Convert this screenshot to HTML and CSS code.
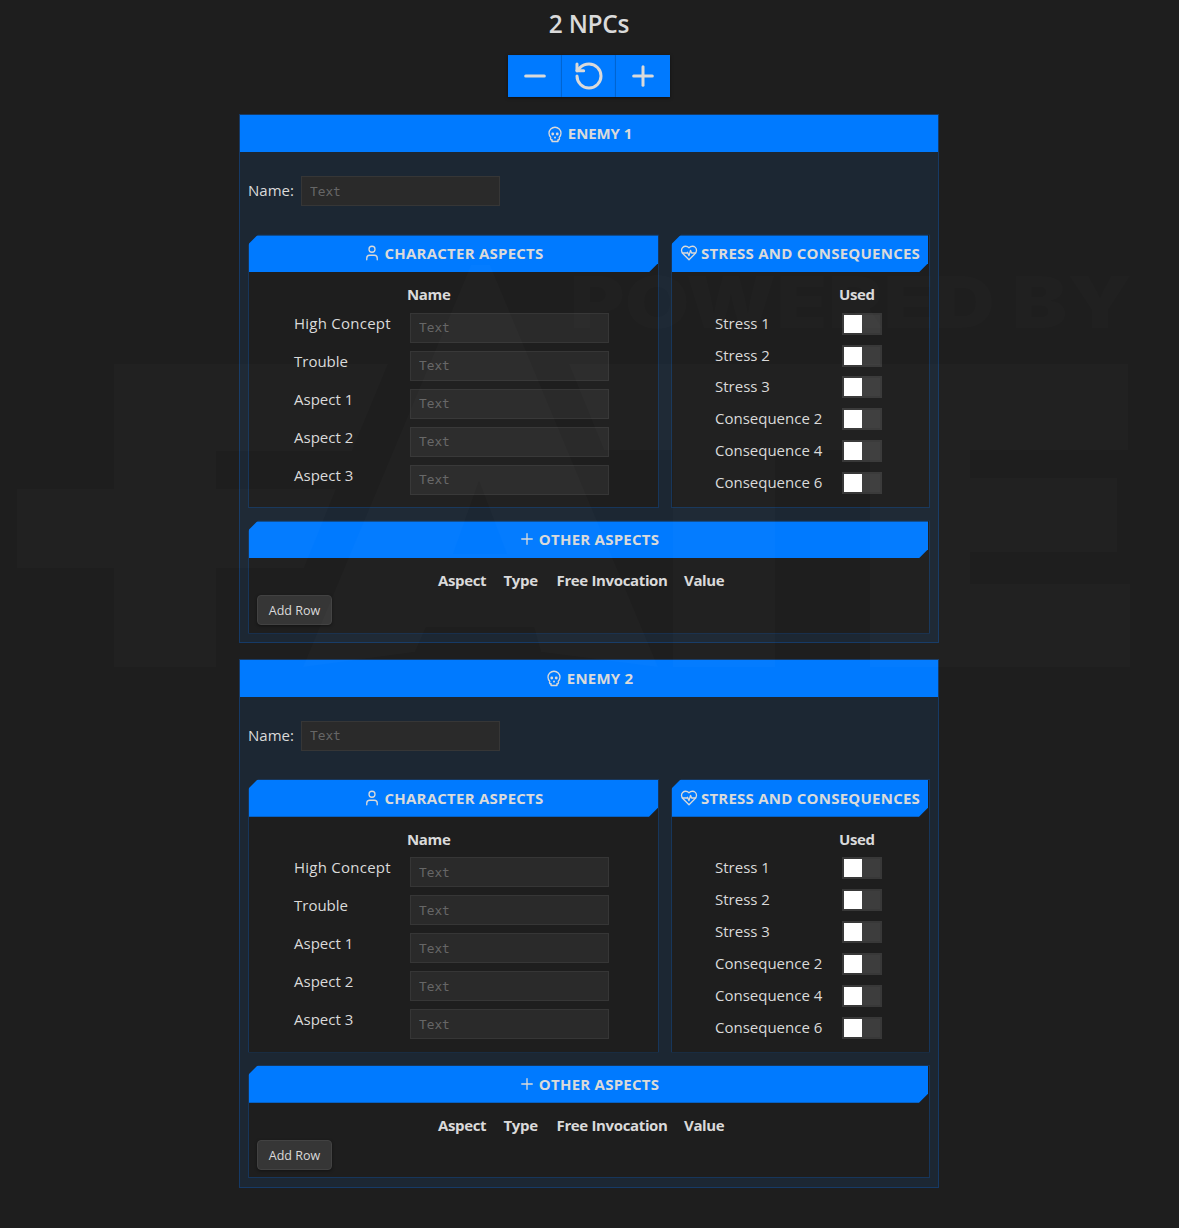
FILE: index.html
```html
<!DOCTYPE html>
<html lang="en">
<head>
<meta charset="utf-8">
<title>2 NPCs</title>
<link rel="stylesheet" href="styles.css">
</head>
<body>
<svg class="symbols" aria-hidden="true">
  <symbol id="skull" viewBox="0 0 24 24"><circle cx="9" cy="12" r="1"/><circle cx="15" cy="12" r="1"/><path d="M8 20v2h8v-2"/><path d="m12.5 17-.5-1-.5 1h1z"/><path d="M16 20a2 2 0 0 0 1.56-3.25 8 8 0 1 0-11.12 0A2 2 0 0 0 8 20"/></symbol>
  <symbol id="user" viewBox="0 0 24 24"><path d="M19 21v-2a4 4 0 0 0-4-4H9a4 4 0 0 0-4 4v2"/><circle cx="12" cy="7" r="4"/></symbol>
  <symbol id="heart" viewBox="0 0 24 24"><path d="M19 14c1.49-1.46 3-3.21 3-5.5A5.5 5.5 0 0 0 16.5 3c-1.76 0-3 .5-4.5 2-1.5-1.5-2.74-2-4.5-2A5.5 5.5 0 0 0 2 8.5c0 2.3 1.5 4.05 3 5.5l7 7Z"/><path d="M3.22 12H9.5l.5-1 2 4.5 2-7 1.5 3.5h5.27"/></symbol>
  <symbol id="plus" viewBox="0 0 24 24"><path d="M5 12h14"/><path d="M12 5v14"/></symbol>
</svg>
<main class="page">
  <h1 class="title">2 NPCs</h1>
  <div class="toolbar">
    <button class="tool"><svg viewBox="0 0 24 24"><path d="M5 12h14"/></svg></button>
    <button class="tool"><svg viewBox="0 0 24 24"><path d="M3 12a9 9 0 1 0 9-9 9.75 9.75 0 0 0-6.74 2.74L3 8"/><path d="M3 3v5h5"/></svg></button>
    <button class="tool"><svg viewBox="0 0 24 24"><use href="#plus"/></svg></button>
  </div>

  <section class="card">
    <h2 class="card-head"><svg><use href="#skull"/></svg><span class="enemy">ENEMY 1</span></h2>
    <div class="name-row"><label>Name:</label><input class="field" placeholder="Text"></div>
    <div class="columns">
      <div class="panel">
        <h3 class="panel-head"><svg><use href="#user"/></svg><span>CHARACTER ASPECTS</span></h3>
        <div class="aspects">
          <b class="col-name">Name</b>
          <label class="hc">High Concept</label><input class="field" placeholder="Text">
          <label>Trouble</label><input class="field" placeholder="Text">
          <label>Aspect 1</label><input class="field" placeholder="Text">
          <label>Aspect 2</label><input class="field" placeholder="Text">
          <label>Aspect 3</label><input class="field" placeholder="Text">
        </div>
      </div>
      <div class="panel">
        <h3 class="panel-head inset"><svg><use href="#heart"/></svg><span>STRESS AND CONSEQUENCES</span></h3>
        <div class="stress">
          <b class="col-used">Used</b>
          <label>Stress 1</label><i class="toggle"></i>
          <label>Stress 2</label><i class="toggle"></i>
          <label>Stress 3</label><i class="toggle"></i>
          <label>Consequence 2</label><i class="toggle"></i>
          <label>Consequence 4</label><i class="toggle"></i>
          <label>Consequence 6</label><i class="toggle"></i>
        </div>
      </div>
    </div>
    <div class="panel other">
      <h3 class="panel-head inset"><svg><use href="#plus"/></svg><span>OTHER ASPECTS</span></h3>
      <div class="other-cols"><b>Aspect</b><b>Type</b><b>Free Invocation</b><b>Value</b></div>
      <button class="add">Add Row</button>
    </div>
  </section>

  <section class="card">
    <h2 class="card-head"><svg><use href="#skull"/></svg><span class="enemy wide">ENEMY 2</span></h2>
    <div class="name-row"><label>Name:</label><input class="field" placeholder="Text"></div>
    <div class="columns">
      <div class="panel">
        <h3 class="panel-head"><svg><use href="#user"/></svg><span>CHARACTER ASPECTS</span></h3>
        <div class="aspects">
          <b class="col-name">Name</b>
          <label class="hc">High Concept</label><input class="field" placeholder="Text">
          <label>Trouble</label><input class="field" placeholder="Text">
          <label>Aspect 1</label><input class="field" placeholder="Text">
          <label>Aspect 2</label><input class="field" placeholder="Text">
          <label>Aspect 3</label><input class="field" placeholder="Text">
        </div>
      </div>
      <div class="panel">
        <h3 class="panel-head inset"><svg><use href="#heart"/></svg><span>STRESS AND CONSEQUENCES</span></h3>
        <div class="stress">
          <b class="col-used">Used</b>
          <label>Stress 1</label><i class="toggle"></i>
          <label>Stress 2</label><i class="toggle"></i>
          <label>Stress 3</label><i class="toggle"></i>
          <label>Consequence 2</label><i class="toggle"></i>
          <label>Consequence 4</label><i class="toggle"></i>
          <label>Consequence 6</label><i class="toggle"></i>
        </div>
      </div>
    </div>
    <div class="panel other">
      <h3 class="panel-head inset"><svg><use href="#plus"/></svg><span>OTHER ASPECTS</span></h3>
      <div class="other-cols"><b>Aspect</b><b>Type</b><b>Free Invocation</b><b>Value</b></div>
      <button class="add">Add Row</button>
    </div>
  </section>
</main>
<svg class="watermark" viewBox="0 0 1179 1228" aria-hidden="true">
  <path fill-rule="evenodd" d="M114 364H388L352 451H216V489H336L304 568H216V667H114V568H17V489H114Z
    M471 265H490L658 667L541 652L534 627H426L415 652L303 667Z M479 481L453 554H507Z
    M569 364H1128V450H970V478H1117V552H970V584H1130V667H870V450H775V667H673V450H604Z"/>
  <text class="wm-powered" x="570" y="328" textLength="562" lengthAdjust="spacingAndGlyphs">POWERED BY</text>
  <text class="wm-tm" x="1146" y="381" textLength="34">TM</text>
</svg>
</body>
</html>
```
FILE: styles.css
```css
* { box-sizing: border-box; }
body {
  margin: 0;
  background: #1e1e1e;
  color: #dadada;
  font: 15px/24px "Open Sans", "Noto Sans", sans-serif;
  overflow: hidden;
}
.symbols { display: none; }
svg { fill: none; stroke: currentColor; stroke-width: 2; stroke-linecap: round; stroke-linejoin: round; }
b, h1, h2, h3 { font-weight: 700; margin: 0; }
b { letter-spacing: -0.35px; }
.page { width: 700px; height: 1228px; margin-left: 239px; display: flex; flex-direction: column; }
.title { font-size: 24.5px; font-weight: 650; line-height: 32px; padding-top: 8px; text-align: center; letter-spacing: -0.3px; }
.toolbar { display: flex; width: 162px; margin: 15px 0 17.4px 269px; box-shadow: 0 1px 3px rgba(0,0,0,.5); }
.tool {
  width: 54px; height: 42px; padding: 0; border: 0; color: #dadada; background: #007aff;
  display: flex; align-items: center; justify-content: center;
}
.tool:not(:last-child) { box-shadow: inset -1px 0 1px rgba(0,0,0,.2); }
.tool svg { width: 32px; height: 32px; stroke-width: 2.25; }
.card {
  height: 528.6px; margin-bottom: 16px; padding: 0 8px;
  border: 1px solid #163a66; background: #1c2733;
}
.card-head {
  height: 37px; margin: 0 -8px; background: #007aff; font-size: 15px; line-height: 36px;
  display: flex; justify-content: center; align-items: center; gap: 4px;
}
.card-head svg, .panel-head svg { width: 18px; height: 18px; stroke-width: 1.75; flex: none; }
.card-head span, .panel-head span { height: 37px; }
.enemy { letter-spacing: -0.1px; }
.wide { letter-spacing: 0.2px; }
.name-row { display: flex; align-items: center; height: 30px; margin-top: 24px; }
.name-row label { width: 53px; height: 26px; }
.field {
  width: 199px; height: 30px; padding: 0 8px; border: 1px solid #363636; border-radius: 0;
  background: #2a2a2a; color: #dadada; font: 12.8px "DejaVu Sans Mono", monospace;
}
.field::placeholder { color: #666; opacity: 1; }
.columns { display: grid; grid-template-columns: 411px 259px; gap: 12px; margin-top: 28px; height: 273.6px; }
.panel {
  border: 1px solid #17365b; background: #1e1e1e;
  clip-path: polygon(10px 0, 100% 0, 100% 100%, 0 100%, 0 10px);
}
.panel-head {
  height: 36.8px; background: #007aff; font-size: 15px; line-height: 36px; letter-spacing: 0.24px;
  display: flex; justify-content: center; align-items: center; gap: 3px; white-space: nowrap;
  clip-path: polygon(0 0, 100% 0, 100% calc(100% - 9px), calc(100% - 9px) 100%, 0 100%);
}
.panel-head.inset { margin-right: 1px; }
.panel-head svg { margin-bottom: 1px; }
.aspects { display: grid; grid-template-columns: 116px 199px; grid-template-rows: 30.5px; grid-auto-rows: 38px; padding: 10px 0 0 45px; }
.col-name, .col-used { grid-column: 1 / -1; }
.col-name { padding-left: 113px; }
.aspects label { line-height: 20px; }
.hc { letter-spacing: 0.25px; }
.stress { display: grid; grid-template-columns: 127px 40px; grid-template-rows: 30.5px; grid-auto-rows: 31.85px; padding: 10px 0 0 43px; }
.col-used { padding-left: 124px; }
.stress label { line-height: 20px; }
.toggle { width: 40px; height: 22px; background: #3d3d3d; border: 2px solid #383838; }
.toggle::before { content: ""; display: block; width: 18px; height: 18px; background: #fff; }
.other { height: 113.4px; margin-top: 12.4px; }
.other-cols { display: grid; grid-template-columns: 65.5px 53px 127.5px auto; padding: 10px 0 0 189px; white-space: nowrap; }
.add {
  display: block; width: 75px; height: 30px; margin: 3.1px 0 0 8px; padding: 1px 0 0;
  border: 1px solid #424242; border-radius: 4px; background: #363636; color: #dadada;
  font: 12.5px "Open Sans", sans-serif; box-shadow: 0 1px 3px rgba(0,0,0,.4);
}
.watermark { position: absolute; left: 0; top: 0; width: 1179px; height: 1228px; fill: #fff; fill-opacity: .014; stroke: none; pointer-events: none; }
.wm-powered { font: 900 71px Inter, sans-serif; fill-opacity: .01; }
.wm-tm { font: 400 23px Inter, sans-serif; fill-opacity: .01; }
```
